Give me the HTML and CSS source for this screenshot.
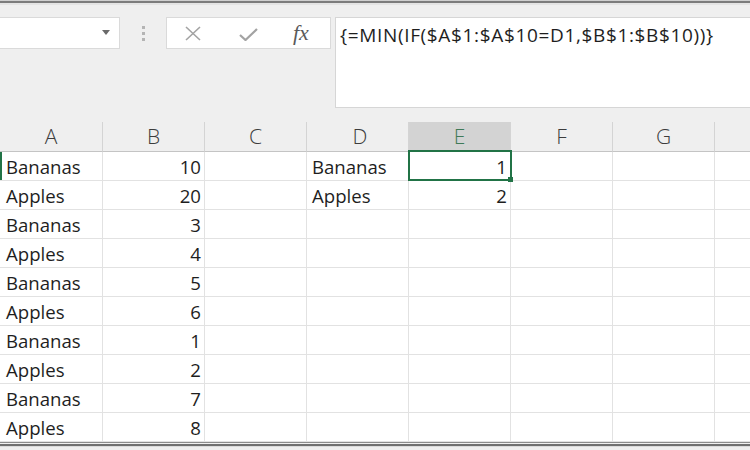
FILE: index.html
```html
<!DOCTYPE html>
<html lang="en">
<head>
  <meta charset="UTF-8">
  <meta name="viewport" content="width=device-width, initial-scale=1.0">
  <title>Array formula MIN IF</title>
  <link rel="stylesheet" href="styles.css">
</head>
<body>
  <div class="frame-top"></div>
  <div class="toolbar">
    <div class="name-box"><span class="caret"></span></div>
    <div class="grip"><i></i><i></i><i></i></div>
    <div class="fx-buttons">
      <svg class="btn-x" width="18" height="15" viewBox="0 0 18 15">
        <path d="M2 1 L16 14 M16 1 L2 14" stroke="#a3a3a3" stroke-width="1.6" fill="none"/>
      </svg>
      <svg class="btn-ok" width="19" height="13" viewBox="0 0 19 13">
        <path d="M1 7 L6.5 12 L18 1" stroke="#a3a3a3" stroke-width="2.2" fill="none"/>
      </svg>
      <span class="fx">fx</span>
    </div>
    <div class="formula">{=MIN(IF($A$1:$A$10=D1,$B$1:$B$10))}</div>
  </div>

  <div class="sheet">
    <div class="row head">
      <div class="cell">A</div>
      <div class="cell">B</div>
      <div class="cell">C</div>
      <div class="cell">D</div>
      <div class="cell active-col">E</div>
      <div class="cell">F</div>
      <div class="cell">G</div>
      <div class="cell"></div>
    </div>
    <div class="row">
      <div class="cell row-mark">Bananas</div><div class="cell num">10</div><div class="cell"></div>
      <div class="cell">Bananas</div><div class="cell num selected">1</div><div class="cell"></div><div class="cell"></div><div class="cell"></div>
    </div>
    <div class="row">
      <div class="cell">Apples</div><div class="cell num">20</div><div class="cell"></div>
      <div class="cell">Apples</div><div class="cell num">2</div><div class="cell"></div><div class="cell"></div><div class="cell"></div>
    </div>
    <div class="row">
      <div class="cell">Bananas</div><div class="cell num">3</div><div class="cell"></div>
      <div class="cell"></div><div class="cell"></div><div class="cell"></div><div class="cell"></div><div class="cell"></div>
    </div>
    <div class="row">
      <div class="cell">Apples</div><div class="cell num">4</div><div class="cell"></div>
      <div class="cell"></div><div class="cell"></div><div class="cell"></div><div class="cell"></div><div class="cell"></div>
    </div>
    <div class="row">
      <div class="cell">Bananas</div><div class="cell num">5</div><div class="cell"></div>
      <div class="cell"></div><div class="cell"></div><div class="cell"></div><div class="cell"></div><div class="cell"></div>
    </div>
    <div class="row">
      <div class="cell">Apples</div><div class="cell num">6</div><div class="cell"></div>
      <div class="cell"></div><div class="cell"></div><div class="cell"></div><div class="cell"></div><div class="cell"></div>
    </div>
    <div class="row">
      <div class="cell">Bananas</div><div class="cell num">1</div><div class="cell"></div>
      <div class="cell"></div><div class="cell"></div><div class="cell"></div><div class="cell"></div><div class="cell"></div>
    </div>
    <div class="row">
      <div class="cell">Apples</div><div class="cell num">2</div><div class="cell"></div>
      <div class="cell"></div><div class="cell"></div><div class="cell"></div><div class="cell"></div><div class="cell"></div>
    </div>
    <div class="row">
      <div class="cell">Bananas</div><div class="cell num">7</div><div class="cell"></div>
      <div class="cell"></div><div class="cell"></div><div class="cell"></div><div class="cell"></div><div class="cell"></div>
    </div>
    <div class="row">
      <div class="cell">Apples</div><div class="cell num">8</div><div class="cell"></div>
      <div class="cell"></div><div class="cell"></div><div class="cell"></div><div class="cell"></div><div class="cell"></div>
    </div>
  </div>
  <div class="frame-bottom"></div>
</body>
</html>
```

FILE: styles.css
```css
body {
  margin: 0;
  padding: 0;
  width: 750px;
  height: 450px;
  overflow: hidden;
  background-color: #efefef;
  font-family: "Open Sans", "Noto Sans", sans-serif;
  color: #1e1e1e;
}
.frame-top {
  height: 2px;
  background: #7c7c7c;
  border-top: 1px solid #cfcfcf;
  border-bottom: 2px solid #e4e4e4;
}
.toolbar {
  display: flex;
  align-items: flex-start;
  height: 117px;
  padding-top: 12px;
  box-sizing: border-box;
}
.name-box {
  position: relative;
  width: 121px;
  height: 32px;
  margin-left: -1px;
  box-sizing: border-box;
  background: #fff;
  border: 1px solid #dadada;
}
.caret {
  position: absolute;
  left: 102px;
  top: 12px;
  border-left: 4.5px solid transparent;
  border-right: 4.5px solid transparent;
  border-top: 5px solid #6a6a6a;
}
.grip {
  width: 46px;
  height: 32px;
  display: flex;
  flex-direction: column;
  align-items: center;
  justify-content: center;
  gap: 3px;
}
.grip i {
  width: 3px;
  height: 3px;
  background: #b4b4b4;
}
.fx-buttons {
  width: 165px;
  height: 32px;
  box-sizing: border-box;
  background: #fff;
  border: 1px solid #dadada;
  display: flex;
  align-items: center;
}
.btn-x {
  margin-left: 17px;
}
.btn-ok {
  margin-left: 37px;
  margin-top: 2px;
}
.fx {
  margin-left: 35px;
  font-family: "Liberation Serif", serif;
  font-style: italic;
  font-size: 22px;
  color: #5a5a5a;
  line-height: 1;
}
.formula {
  flex: 1;
  margin-left: 4px;
  height: 91px;
  box-sizing: border-box;
  background: #fff;
  border: 1px solid #d6d6d6;
  border-right: none;
  padding: 5px 0 0 4px;
  font-size: 19px;
  letter-spacing: 0.65px;
  line-height: 24px;
  white-space: nowrap;
  overflow: hidden;
}
.sheet {
  width: 750px;
  overflow: hidden;
  background: #fff;
}
.row {
  display: grid;
  grid-template-columns: 103px repeat(7, 102px);
  height: 29px;
}
.cell {
  position: relative;
  box-sizing: border-box;
  height: 29px;
  border-right: 1px solid #e2e2e2;
  border-bottom: 1px solid #e2e2e2;
  padding: 0 3px 0 6px;
  font-size: 18.6px;
  line-height: 29px;
  white-space: nowrap;
}
.row .cell:nth-child(4) {
  padding-left: 5px;
}
.num {
  text-align: right;
}
.head {
  height: 30px;
  background: #efefef;
}
.head .cell {
  height: 30px;
  padding: 0;
  text-align: center;
  font-weight: 300;
  font-size: 21px;
  line-height: 29px;
  color: #3c3c3c;
  background: #efefef;
  border-right-color: #d4d4d4;
  border-bottom-color: #c4c4c4;
}
.head .active-col {
  background: #d3d3d3;
  color: #3f7a58;
  border-bottom-color: #b9b9b9;
}
.row-mark {
  box-shadow: inset 2px 0 #217346;
}
.selected::after {
  content: "";
  position: absolute;
  top: -2px;
  left: -1px;
  right: -2px;
  bottom: -1px;
  border: 2px solid #217346;
}
.selected::before {
  content: "";
  position: absolute;
  right: -3px;
  bottom: -2px;
  width: 5px;
  height: 5px;
  background: #217346;
  z-index: 1;
}
.frame-bottom {
  height: 4px;
  background: #dadada;
  border-top: 1px solid #8c8c8c;
  box-shadow: inset 0 1px #f0f0f0, inset 0 3px #707070;
}
```
